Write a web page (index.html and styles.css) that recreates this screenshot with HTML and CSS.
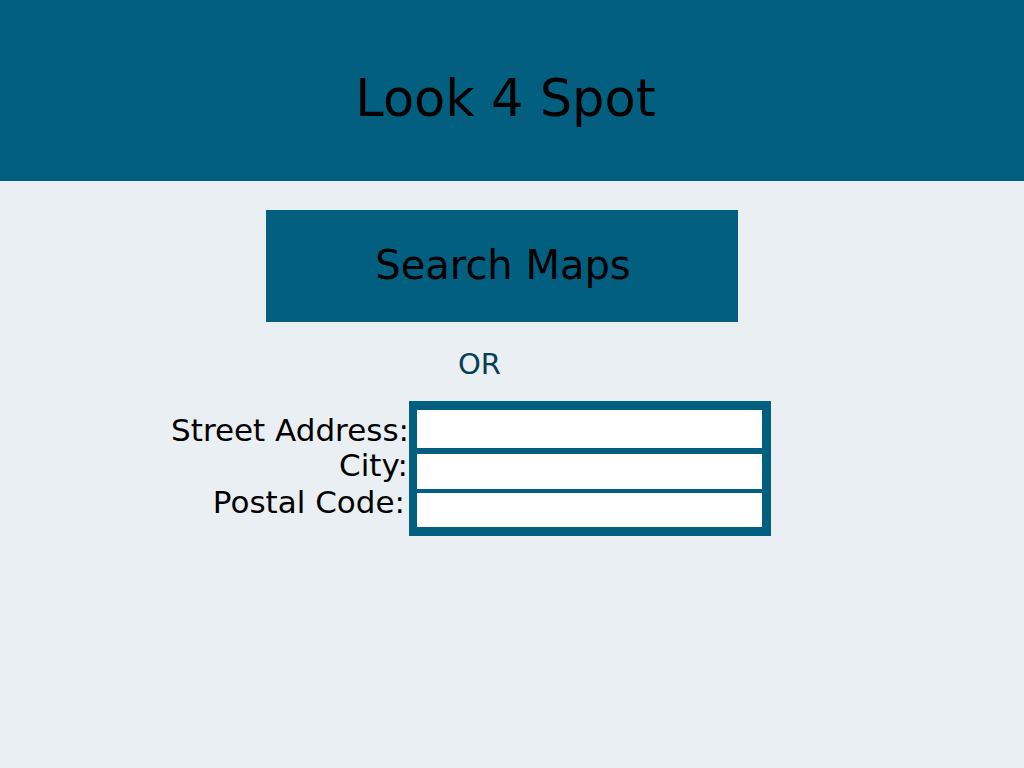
FILE: index.html
```html
<!DOCTYPE html>
<html lang="en">
<head>
<meta charset="utf-8">
<title>Look 4 Spot</title>
<link rel="stylesheet" href="styles.css">
</head>
<body>
<header class="top-bar">
  <h1 class="title">Look 4 Spot</h1>
</header>
<main class="content">
  <button class="search-btn" type="button">Search Maps</button>
  <p class="or">OR</p>
  <form class="address-form">
    <div class="labels">
      <label class="lbl lbl-street" for="street">Street Address:</label>
      <label class="lbl lbl-city" for="city">City:</label>
      <label class="lbl lbl-postal" for="postal">Postal Code:</label>
    </div>
    <div class="fields">
      <input class="field field-street" id="street" type="text">
      <input class="field field-city" id="city" type="text">
      <input class="field field-postal" id="postal" type="text">
    </div>
  </form>
</main>
</body>
</html>
```

FILE: styles.css
```css
* { box-sizing: border-box; }

html, body {
  margin: 0;
  padding: 0;
}

body {
  background: #eaeff3;
  font-family: "DejaVu Sans", Verdana, sans-serif;
  color: #000;
  min-height: 768px;
}

.top-bar {
  background: #035f7f;
  height: 181px;
  padding-top: 73px;
  display: flex;
  justify-content: center;
}

.title {
  margin: 0 0 0 -13px;
  font-size: 51px;
  font-weight: normal;
  line-height: 51px;
  height: 51px;
}

.content {
  display: flex;
  flex-direction: column;
  padding-top: 29px;
}

.search-btn {
  margin-left: 266px;
  width: 472px;
  height: 112px;
  background: #035f7f;
  border: none;
  border-radius: 0;
  font-family: "DejaVu Sans", Verdana, sans-serif;
  font-size: 40px;
  color: #000;
  padding: 0 0 3px 2px;
  cursor: pointer;
}

.or {
  margin: 27px 0 0 458px;
  font-size: 29px;
  line-height: 30px;
  height: 30px;
  color: #053f55;
}

.address-form {
  display: flex;
  margin: 22px 0 0 0;
}

.labels {
  width: 407px;
  display: flex;
  flex-direction: column;
  align-items: flex-end;
  padding-top: 11px;
  font-size: 31px;
}

.lbl {
  display: block;
  line-height: 36px;
  height: 36px;
}

.lbl-street { height: 35px; margin-right: -2px; }
.lbl-city { height: 37px; margin-right: -1px; }
.lbl-postal { margin-right: 2px; }

.fields {
  margin-left: 2px;
  width: 362px;
  height: 135px;
  background: #035f7f;
  padding: 9px 9px 9px 8px;
  display: flex;
  flex-direction: column;
}

.field {
  display: block;
  width: 345px;
  border: none;
  border-radius: 0;
  background: #fff;
  margin: 0;
  padding: 0 4px;
  font-size: 20px;
  font-family: "DejaVu Sans", Verdana, sans-serif;
  outline: none;
}

.field-street { height: 38px; margin-bottom: 6px; }
.field-city { height: 35px; margin-bottom: 4px; }
.field-postal { height: 34px; }
```
